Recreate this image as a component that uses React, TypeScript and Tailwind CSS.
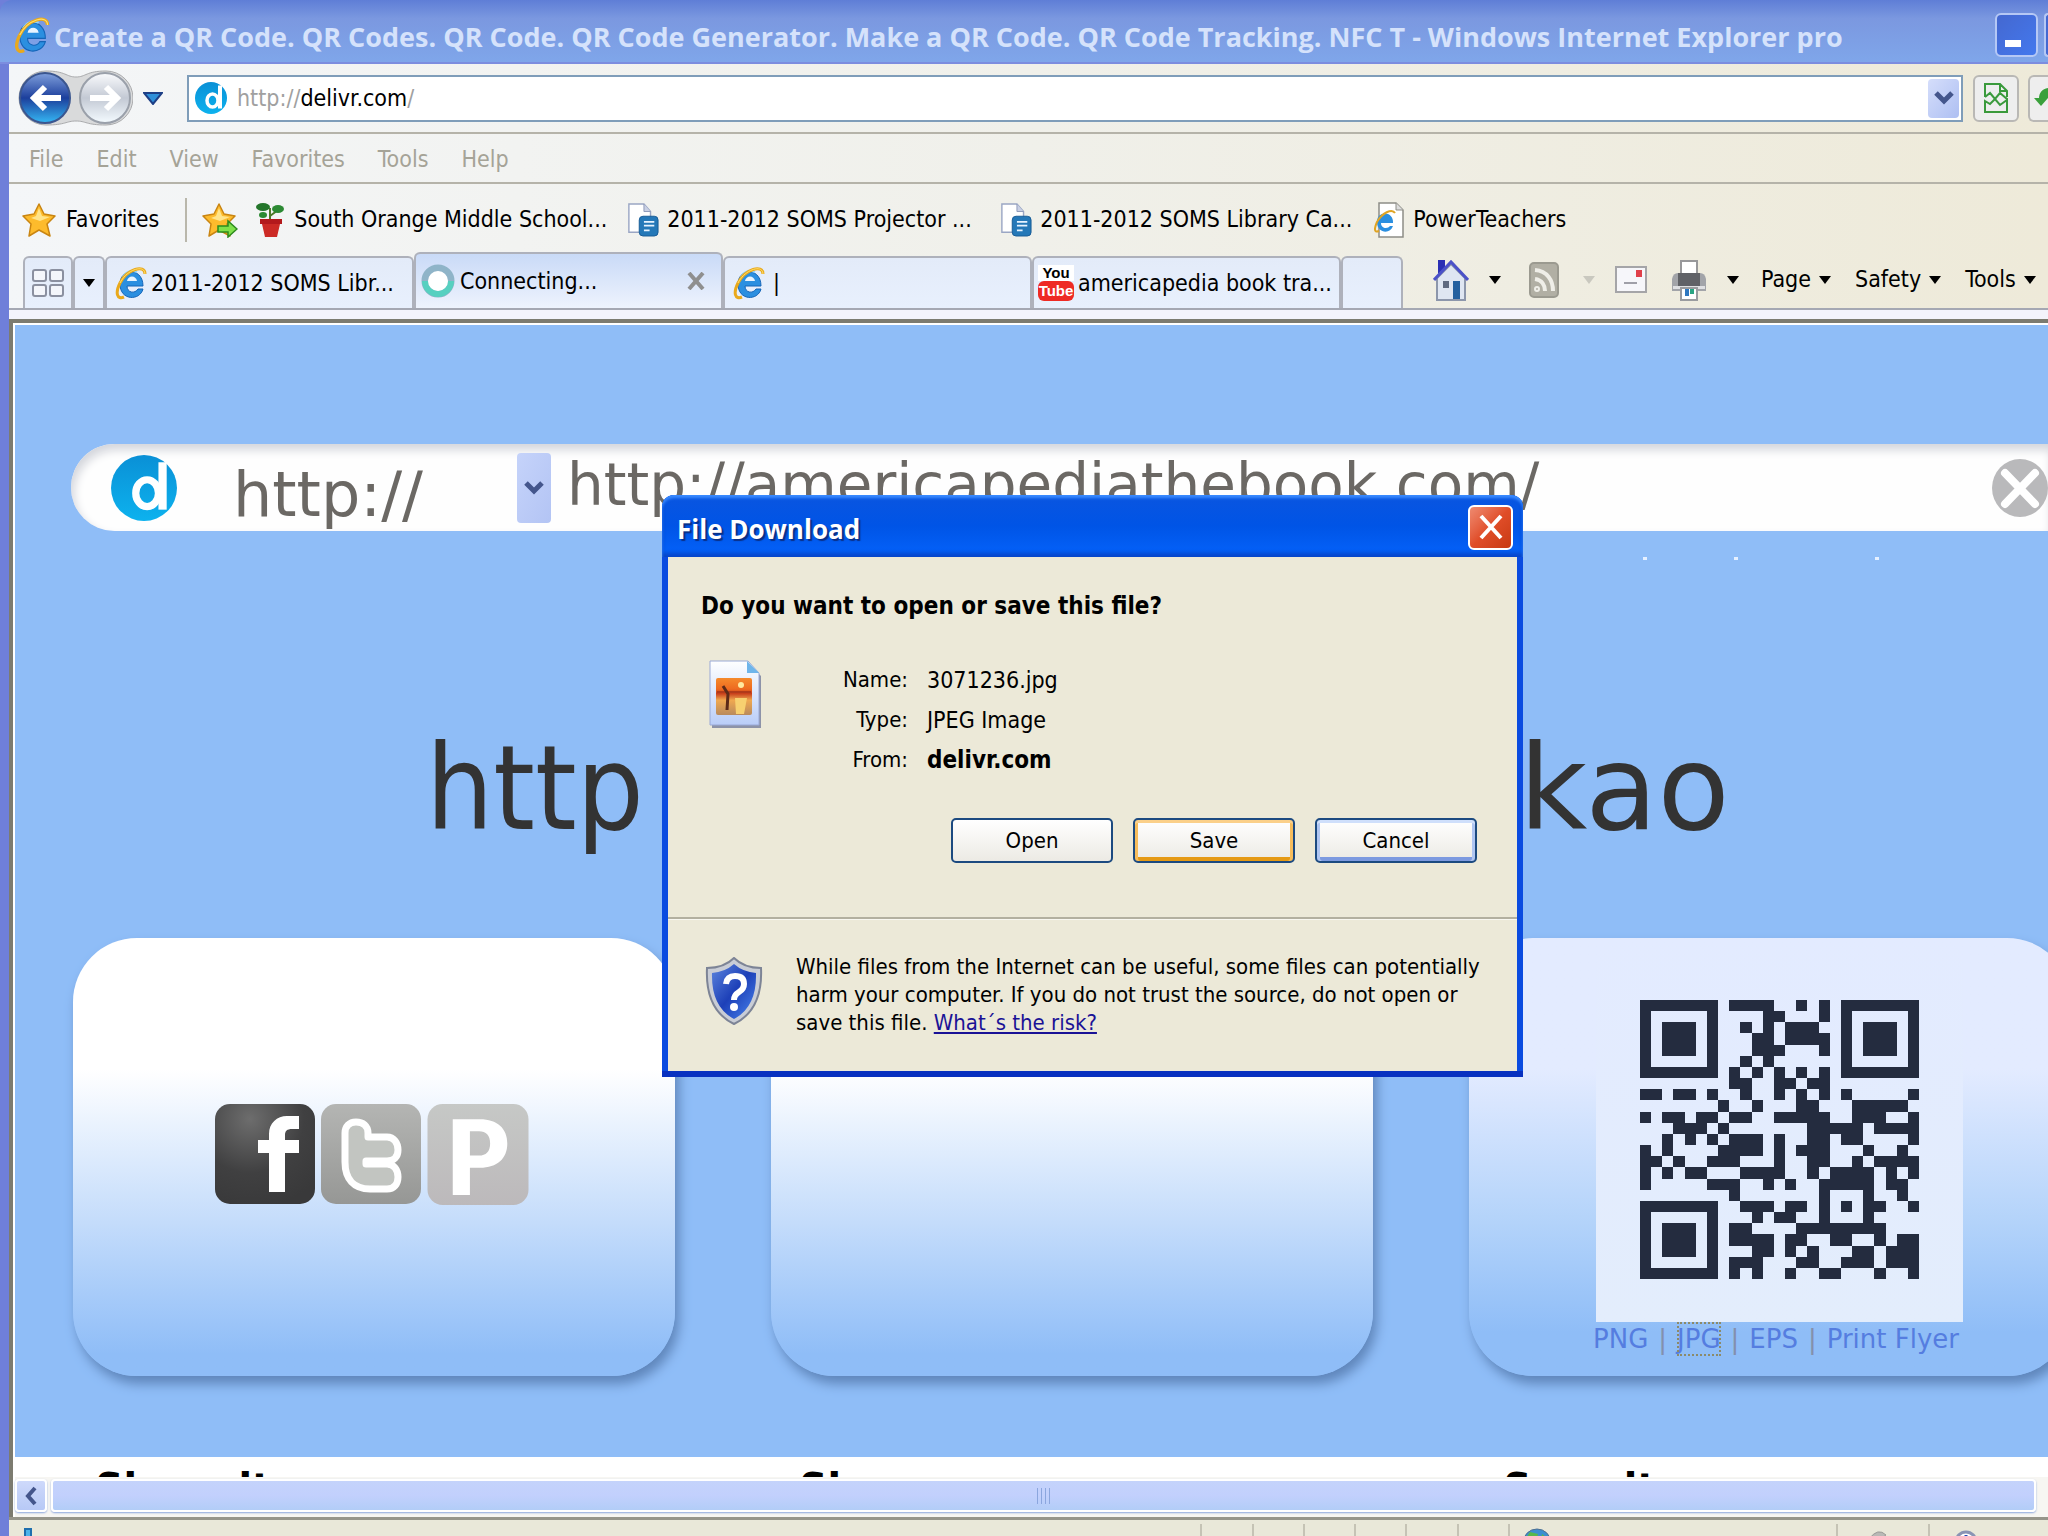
import { ReactNode } from 'react';

const qrRows = [
  '1111111011110010101111111',
  '1000001000011000101000001',
  '1011101001010111001011101',
  '1011101000110111101011101',
  '1011101000111000101011101',
  '1000001001010000001000001',
  '1111111010101010101111111',
  '0000000011001101100000000',
  '1101101001001010101000001',
  '0000000100100011000111110',
  '1011011011001111100111001',
  '0001110100000001111101111',
  '0010101011101001101100001',
  '1010000111101011100010010',
  '1101001110001001100101111',
  '1010110001111001011110101',
  '1000001110010100111110110',
  '0000000010000000100010010',
  '1111111001110110101011001',
  '1000001000101100100010000',
  '1011101011000011111111000',
  '1011101011110110011001011',
  '1011101000110101000110111',
  '1000001011100011001110111',
  '1111111010100100110001001',
];

const menuItems = ['File', 'Edit', 'View', 'Favorites', 'Tools', 'Help'];

const ui = "font-['DejaVu_Sans_Condensed','DejaVu_Sans',sans-serif]";

function IeIcon({ className = 'w-8 h-9' }: { className?: string }) {
  return (
    <svg viewBox="0 0 32 36" className={className} aria-hidden="true">
      <path d="M28 21H12c0 7 8 8 11 3h5c-3 12-23 12-23-5C5 3 28 2 28 21z" fill="#2b8fe0" stroke="#1565b8" />
      <path d="M12 16h10c-1-6-9-6-10 0z" fill="#e8f4ff" />
      <path d="M8 12c3-6 9-7 14-5" fill="none" stroke="#8fd4ff" strokeWidth="2" />
      <path d="M30 9C30-1 12 4 5 18c-5 10-3 17 4 14" fill="none" stroke="#e9a91c" strokeWidth="3" />
      <path d="M30 9C30-1 12 4 5 18" fill="none" stroke="#ffdf6e" strokeWidth="1" />
    </svg>
  );
}

function DelivrLogo({ className }: { className: string }) {
  return (
    <svg viewBox="0 0 64 64" className={className} aria-hidden="true">
      <defs>
        <linearGradient id="delivr" x1="0" y1="0" x2="0" y2="1">
          <stop offset="0" stopColor="#0a90d6" />
          <stop offset="1" stopColor="#0db2ee" />
        </linearGradient>
      </defs>
      <circle cx="32" cy="32" r="32" fill="url(#delivr)" />
      <ellipse cx="35" cy="37" rx="11" ry="13" fill="none" stroke="#fff" strokeWidth="7" />
      <path d="M50 7v46" stroke="#fff" strokeWidth="8" />
    </svg>
  );
}

function StarIcon({ add = false }: { add?: boolean }) {
  return (
    <svg viewBox="0 0 36 36" className="w-9 h-9" aria-hidden="true">
      <path d="M17 2l5 10 11 2-8 8 3 12-11-6-10 6 2-12-8-8 11-2z" fill="#fdbb2c" stroke="#c98512" strokeWidth="1.5" strokeLinejoin="round" />
      <path d="M17 6l3 8 8 1-10 4-9-3 5-2z" fill="#ffe48a" />
      {add && <path d="M16 24h10v-5l9 8-9 8v-5H16z" fill="#7fe04a" stroke="#2b8a1d" strokeWidth="1.5" />}
    </svg>
  );
}

function PlantIcon() {
  return (
    <svg viewBox="0 0 32 36" className="w-8 h-9" aria-hidden="true">
      <path d="M16 18V6M16 14l8-6" stroke="#4c7a28" strokeWidth="2" />
      <ellipse cx="9" cy="5" rx="7" ry="4" fill="#24762b" />
      <ellipse cx="24" cy="7" rx="6" ry="4" fill="#2c8a33" />
      <ellipse cx="9" cy="13" rx="4" ry="3" fill="#2c8a33" />
      <path d="M6 17h22v5H6z" fill="#b3191c" />
      <path d="M8 22h18l-3 13H11z" fill="#cc2a25" />
    </svg>
  );
}

function DocIcon() {
  return (
    <svg viewBox="0 0 34 36" className="w-8 h-9" aria-hidden="true">
      <path d="M2 1h16l7 8v22H2z" fill="#fff" stroke="#9aa6c4" strokeWidth="1.5" />
      <path d="M18 1v8h7" fill="#c9d0e4" stroke="#8b97b8" />
      <rect x="13" y="14" width="20" height="21" rx="4" fill="#2478b8" stroke="#155a94" />
      <path d="M18 20h11M18 24h11M18 29h6" stroke="#e6f3ff" strokeWidth="2" />
    </svg>
  );
}

function PageIeIcon() {
  return (
    <svg viewBox="0 0 32 36" className="w-8 h-9" aria-hidden="true">
      <path d="M6 1h17l7 7v27H6z" fill="#fff" stroke="#8d8d86" strokeWidth="1.5" />
      <path d="M23 1v7h7" fill="#ddd" stroke="#8d8d86" />
      <path d="M20 21H8c0 6 7 6 9 3h3c-3 9-16 7-16-4 0-12 17-11 16 1z" fill="#2b8fe0" />
      <path d="M22 11c-3-5-13 0-18 9-3 7-3 11 2 9" fill="none" stroke="#e0a423" strokeWidth="2" />
    </svg>
  );
}

function Caret({ color = '#000' }: { color?: string }) {
  return (
    <svg viewBox="0 0 12 8" className="w-3 h-2 shrink-0" aria-hidden="true">
      <path d="M0 0h12L6 8z" fill={color} />
    </svg>
  );
}

function Chevron({ className }: { className: string }) {
  return (
    <svg viewBox="0 0 20 14" className={className} aria-hidden="true">
      <path d="M2 2l8 8 8-8" fill="none" stroke="#44568c" strokeWidth="5" />
    </svg>
  );
}

function Bookmark({ icon, label, width }: { icon: ReactNode; label: string; width: string }) {
  return (
    <a href="#" className={`flex items-center gap-2 shrink-0 whitespace-nowrap ${width}`}>
      {icon}
      {label}
    </a>
  );
}

function TitleBar() {
  return (
    <header className="flex items-center h-16 pl-[14px] pr-0 shrink-0 rounded-tl-xl bg-linear-to-b from-[#5f7ed6] via-[#7b98e0] via-30% to-[#7fa6ea] border-b-2 border-[#7c8ddf] overflow-hidden">
      <IeIcon className="w-9 h-10 mt-2 shrink-0" />
      <h1 className="ml-1 pt-3 grow whitespace-nowrap font-['Open_Sans',sans-serif] font-bold text-[27px] text-[#d5e2fb]">
        Create a QR Code. QR Codes. QR Code. QR Code Generator. Make a QR Code. QR Code Tracking. NFC T - Windows Internet Explorer pro
      </h1>
      <button aria-label="Minimize" className="flex items-end w-[43px] h-11 mt-2 p-2 shrink-0 rounded-md border-2 border-[#b5c8f5] bg-linear-to-br from-[#4468d0] to-[#4378ee]">
        <span className="w-4 h-[7px] bg-white" />
      </button>
      <button aria-label="Maximize" className="w-1 h-11 mt-2 ml-[6px] shrink-0 rounded-l-md border-2 border-r-0 border-[#b5c8f5] bg-[#4468d0]" />
    </header>
  );
}

function NavBar() {
  return (
    <div className="flex items-center h-[70px] pl-2 shrink-0 border-b-2 border-[#b5b3a9] overflow-hidden">
      <svg viewBox="0 0 116 58" className="w-[116px] h-[58px] shrink-0" aria-label="Back and forward">
        <defs>
          <linearGradient id="back" x1="0" y1="0" x2="0" y2="1">
            <stop offset="0" stopColor="#7f9fdc" />
            <stop offset="0.5" stopColor="#1c3f9c" />
            <stop offset="1" stopColor="#35b8f4" />
          </linearGradient>
          <linearGradient id="fwd" x1="0" y1="0" x2="0" y2="1">
            <stop offset="0" stopColor="#fafbfd" />
            <stop offset="0.5" stopColor="#c3c9d4" />
            <stop offset="1" stopColor="#f4fbff" />
          </linearGradient>
        </defs>
        <path d="M29 2c20 0 20 6 30 6s10-6 30-6a27 27 0 010 54c-20 0-20-4-30-4s-10 4-30 4a27 27 0 010-54z" fill="#d9dadb" stroke="#a9aaac" />
        <circle cx="28" cy="29" r="25" fill="url(#back)" stroke="#3b568f" strokeWidth="2" />
        <circle cx="88" cy="29" r="25" fill="url(#fwd)" stroke="#9aa0aa" strokeWidth="2" />
        <path d="M44 29H18M28 18L17 29l11 11" fill="none" stroke="#fff" strokeWidth="6" />
        <path d="M73 29h26M89 18l11 11-11 11" fill="none" stroke="#fff" strokeWidth="6" />
      </svg>
      <button aria-label="Recent pages" className="ml-[10px] shrink-0">
        <svg viewBox="0 0 20 14" className="w-5 h-[14px]"><path d="M1 2h18l-9 11z" fill="#2f8fd8" stroke="#1d3f86" strokeWidth="2" /></svg>
      </button>
      <form className="flex items-center grow h-[47px] ml-6 pl-[6px] pr-[2px] border-2 border-[#7f9db9] bg-white" onSubmit={(e) => e.preventDefault()}>
        <DelivrLogo className="w-8 h-8 shrink-0" />
        <label className="flex items-center grow ml-[10px] text-[23px] text-[#a0a0a0] whitespace-nowrap">
          http://<span className="text-black">delivr.com</span>/
          <input aria-label="Address" className="grow min-w-0 outline-none" />
        </label>
        <button type="button" aria-label="Show addresses" className="flex items-center justify-center w-[31px] h-[39px] rounded-sm bg-linear-to-br from-[#d5defb] to-[#aebff2]">
          <Chevron className="w-5 h-[14px]" />
        </button>
      </form>
      <button aria-label="Compatibility view" className="flex items-center justify-center w-[46px] h-[47px] ml-[10px] shrink-0 rounded-md border-2 border-[#b9b8b5] bg-[#eeeeee]">
        <svg viewBox="0 0 26 32" className="w-[26px] h-8" fill="none" stroke="#3a9a3c" strokeWidth="2">
          <path d="M2 15V2h15l7 7v6M17 2v7h7M2 15l5-4 5 6 5-6 7 6M2 19l5 3 5-5 5 6 7-5v12H2z" />
        </svg>
      </button>
      <button aria-label="Refresh" className="flex items-center w-5 h-[47px] pl-1 ml-[9px] shrink-0 rounded-l-md border-2 border-r-0 border-[#b9b8b5] bg-[#eeeeee] overflow-hidden">
        <svg viewBox="0 0 14 24" className="w-[14px] h-6"><path d="M14 2C8 3 5 7 5 12H0l7 8 7-8z" fill="#3aa03c" /></svg>
      </button>
    </div>
  );
}

function FavoritesBar() {
  return (
    <div className="flex items-center h-[67px] pl-[13px] pt-1 shrink-0 overflow-hidden">
      <button className="flex items-center gap-2 shrink-0"><StarIcon />Favorites</button>
      <span className="w-[2px] h-11 ml-[26px] mr-[15px] bg-[#b9b7ab]" />
      <button aria-label="Add to favorites bar" className="mr-4"><StarIcon add /></button>
      <Bookmark icon={<PlantIcon />} label="South Orange Middle School..." width="w-[373px]" />
      <Bookmark icon={<DocIcon />} label="2011-2012 SOMS Projector ..." width="w-[373px]" />
      <Bookmark icon={<DocIcon />} label="2011-2012 SOMS Library Ca..." width="w-[373px]" />
      <Bookmark icon={<PageIeIcon />} label="PowerTeachers" width="w-[240px]" />
    </div>
  );
}

const tab = 'flex items-center h-[52px] shrink-0 border-2 border-b-0 border-[#aeb1bb] rounded-t-md bg-linear-to-b from-[#e3ebf9] to-[#e8f0fd] whitespace-nowrap';

function TabBar() {
  return (
    <div className="flex items-end h-[59px] pl-[14px] shrink-0 border-b-2 border-[#a5a8b3] overflow-hidden">
      <button aria-label="Quick tabs" className={`${tab} w-[50px] justify-center`}>
        <svg viewBox="0 0 34 30" className="w-[34px] h-[30px]" fill="#f4f6fb" stroke="#8b90a0" strokeWidth="2">
          <rect x="2" y="2" width="13" height="11" rx="2" />
          <rect x="19" y="2" width="13" height="11" rx="2" />
          <rect x="2" y="17" width="13" height="11" rx="2" />
          <rect x="19" y="17" width="13" height="11" rx="2" />
        </svg>
      </button>
      <button aria-label="Tab list" className={`${tab} w-8 justify-center`}><Caret /></button>
      <button className={`${tab} w-[309px] pl-2 gap-1`}><IeIcon />2011-2012 SOMS Libr...</button>
      <div className="flex items-center justify-between h-[56px] w-[309px] pl-1 pr-4 shrink-0 border-2 border-b-0 border-[#aeb1bb] rounded-t-md bg-linear-to-b from-[#c9daf7] to-[#eef3fd]">
        <button className="flex items-center gap-1">
          <svg viewBox="0 0 36 36" className="w-9 h-9">
            <circle cx="18" cy="18" r="13" fill="none" stroke="#8fb4c8" strokeWidth="7" />
            <path d="M5 18a13 13 0 0026 0" fill="none" stroke="#56d0c0" strokeWidth="6" />
            <circle cx="18" cy="18" r="10" fill="#fff" />
          </svg>
          Connecting...
        </button>
        <button aria-label="Close tab">
          <svg viewBox="0 0 18 18" className="w-[18px] h-[18px]"><path d="M2 1l14 16M16 1L2 17" stroke="#8f8f8f" strokeWidth="4" /></svg>
        </button>
      </div>
      <button className={`${tab} w-[309px] pl-2 gap-2`}><IeIcon />|</button>
      <button className={`${tab} w-[309px] pl-1 gap-1`}>
        <span className="flex flex-col w-9 shrink-0 text-center font-['Liberation_Sans_Narrow','Liberation_Sans',sans-serif] font-bold text-[15px] leading-4">
          <span className="bg-white text-black">You</span>
          <span className="rounded-md bg-[#ee2a24] text-white leading-5">Tube</span>
        </span>
        americapedia book tra...
      </button>
      <button aria-label="New tab" className={`${tab} w-[62px]`} />
      <div className="flex items-center h-full grow pl-[30px] shrink-0 whitespace-nowrap">
        <button aria-label="Home" className="flex items-center gap-5">
          <svg viewBox="0 0 36 42" className="w-9 h-[42px]">
            <path d="M4 19L18 5l14 14v22H4z" fill="#dfe6f2" stroke="#8c96ab" strokeWidth="2" />
            <path d="M5 1h7v8l-7 6z" fill="#2a2fb4" />
            <path d="M1 21L18 3l17 18" fill="none" stroke="#4b51c8" strokeWidth="3" />
            <path d="M20 22h7v18h-7z" fill="#24609f" />
            <path d="M10 22h6v7h-6z" fill="#5f6a80" />
          </svg>
          <Caret />
        </button>
        <button aria-label="Feeds" className="flex items-center gap-6 ml-7">
          <svg viewBox="0 0 30 36" className="w-[30px] h-9" fill="none" stroke="#efeee8" strokeWidth="4">
            <rect x="1" y="1" width="28" height="34" rx="4" fill="#b1afa4" stroke="#9b9a90" strokeWidth="2" />
            <path d="M6 17c7 1 10 6 10 12M6 8c12 1 18 10 18 21" />
            <circle cx="8" cy="27" r="1" />
          </svg>
          <Caret color="#c9c8bf" />
        </button>
        <button aria-label="Read mail" className="ml-5">
          <svg viewBox="0 0 32 27" className="w-8 h-[27px]">
            <rect x="1" y="1" width="30" height="25" fill="#f6f6fa" stroke="#a5a5a8" strokeWidth="2" />
            <rect x="21" y="4" width="6" height="7" fill="#e0404a" />
            <path d="M9 17h13" stroke="#9f9fa8" strokeWidth="2" />
          </svg>
        </button>
        <button aria-label="Print" className="flex items-center gap-5 ml-6">
          <svg viewBox="0 0 36 42" className="w-9 h-[42px]">
            <path d="M10 2h16v14H10z" fill="#fff" stroke="#98989a" strokeWidth="2" />
            <path d="M1 20q1-6 6-6h22q5 0 6 6v12H1z" fill="#a2a4a9" />
            <path d="M7 14h22v13H7z" fill="#606267" />
            <path d="M2 27h32v3H2z" fill="#dfe0e3" />
            <path d="M10 29h16v12H10z" fill="#fff" stroke="#9a9c9f" strokeWidth="2" />
            <path d="M14 30h4v7h-4z" fill="#2f78c0" />
            <path d="M19 30h4v5h-4z" fill="#2aa583" />
          </svg>
          <Caret />
        </button>
        <button className="flex items-center gap-2 ml-[22px]">Page <Caret /></button>
        <button className="flex items-center gap-2 ml-6">Safety <Caret /></button>
        <button className="flex items-center gap-2 ml-6">Tools <Caret /></button>
      </div>
    </div>
  );
}

function SearchBar() {
  return (
    <form
      onSubmit={(e) => e.preventDefault()}
      className="flex items-center h-[87px] w-full shrink-0 pl-10 rounded-l-full bg-[#fefefe] shadow-[inset_3px_6px_10px_#d4d6dc] font-['DejaVu_Sans',sans-serif] text-[58px] text-[#6b6864] overflow-hidden"
    >
      <DelivrLogo className="w-[66px] h-[66px] shrink-0" />
      <div className="relative ml-14 w-[318px] h-[70px] shrink-0">
        <select aria-label="Protocol" className="appearance-none w-full h-full leading-[70px] text-[62px] bg-transparent outline-none">
          <option>http://</option>
        </select>
        <span className="absolute right-0 top-0 flex items-center justify-center w-[34px] h-[70px] rounded-sm bg-linear-to-br from-[#c5d3fa] to-[#b3c4f4] pointer-events-none">
          <Chevron className="w-5 h-[14px]" />
        </span>
      </div>
      <input aria-label="Long URL" defaultValue="http://americapediathebook.com/" className="grow min-w-0 h-[87px] ml-4 pb-1 bg-transparent outline-none" />
      <button aria-label="Clear" className="shrink-0">
        <svg viewBox="0 0 56 60" className="w-14 h-[60px]">
          <ellipse cx="28" cy="30" rx="28" ry="29" fill="#b9b9bb" />
          <path d="M13 15l30 31M43 15L13 46" stroke="#fff" strokeWidth="8" strokeLinecap="round" />
        </svg>
      </button>
    </form>
  );
}

function SocialIcons() {
  return (
    <div className="flex gap-[6px]">
      <a href="#" aria-label="Facebook">
        <svg viewBox="0 0 100 100" className="w-[100px] h-[100px]">
          <defs>
            <radialGradient id="fb" cx="0.35" cy="0.15" r="0.9">
              <stop offset="0" stopColor="#6d6d6d" />
              <stop offset="0.6" stopColor="#404041" />
              <stop offset="1" stopColor="#39393a" />
            </radialGradient>
          </defs>
          <rect width="100" height="100" rx="15" fill="url(#fb)" />
          <path d="M54 88V49H43V36h11v-6c0-11 8-18 18-18h12v13h-7c-5 0-7 2-7 6v5h14v13H70v39z" fill="#fff" />
        </svg>
      </a>
      <a href="#" aria-label="Twitter">
        <svg viewBox="0 0 100 100" className="w-[100px] h-[100px]">
          <defs>
            <linearGradient id="tw" x1="0" y1="0" x2="0" y2="1">
              <stop offset="0" stopColor="#b4b5b3" />
              <stop offset="1" stopColor="#969795" />
            </linearGradient>
          </defs>
          <rect width="100" height="100" rx="15" fill="url(#tw)" />
          <path
            d="M35 18c-7 0-11 5-11 11v29c0 17 9 27 25 27h17c7 0 11-5 11-12s-4-13-11-13H45v-3h21c7 0 11-4 11-11s-4-13-11-13H47v-4c0-7-5-11-12-11z"
            fill="#c2c5c1"
            stroke="#fff"
            strokeWidth="7"
            strokeLinejoin="round"
          />
        </svg>
      </a>
      <a href="#" aria-label="Pinterest">
        <svg viewBox="0 0 100 100" className="w-[102px] h-[101px]">
          <defs>
            <linearGradient id="pin" x1="0" y1="0" x2="0" y2="1">
              <stop offset="0" stopColor="#c6c8c6" />
              <stop offset="1" stopColor="#bcb9bb" />
            </linearGradient>
          </defs>
          <rect width="100" height="100" rx="15" fill="url(#pin)" />
          <path fillRule="evenodd" d="M25 15h27c17 0 27 9 27 24S69 63 52 63H42v27H25zM42 27v24h9c7 0 11-4 11-12s-4-12-11-12z" fill="#fff" />
        </svg>
      </a>
    </div>
  );
}

function QrCode() {
  return (
    <svg viewBox="0 0 25 25" className="w-[279px] h-[279px]" shapeRendering="crispEdges" role="img" aria-label="QR code">
      {qrRows.map((row, y) =>
        row.split('').map((cell, x) =>
          cell === '1' ? <rect key={`${x}-${y}`} x={x} y={y} width="1" height="1" fill="#242c3f" /> : null
        )
      )}
    </svg>
  );
}

const card = 'w-[602px] h-[438px] shrink-0 rounded-[64px] shadow-[4px_8px_12px_#5f86bb] bg-linear-to-b';

function WebPage() {
  return (
    <main className="relative flex flex-col grow min-h-0 bg-white overflow-hidden">
      <div className="flex flex-col h-[1132px] shrink-0 pl-[56px] pt-[119px] bg-[#8fbdf7]">
        <SearchBar />
        <div className="flex h-[3px] mt-[26px] pl-[1572px] shrink-0">
          <i className="w-1 bg-[#e6f0ff] mr-[87px]" />
          <i className="w-1 bg-[#e6f0ff] mr-[137px]" />
          <i className="w-1 bg-[#e6f0ff]" />
        </div>
        {/* short link, partly behind the download dialog */}
        <h2 className="flex pl-[355px] mt-[143px] h-[170px] items-center text-[118px] leading-none text-[#333333]">
          <span>http</span>
          <span className="w-[875px] pl-2">:</span>
          <span className="font-['DejaVu_Sans',sans-serif]">kao</span>
        </h2>
        <div className="flex gap-24 mt-[65px] pl-[2px]">
          <section className={`${card} from-white from-30% via-[#c4dcfb] via-65% to-[#8fbdf7] to-95% flex justify-start pl-[142px] pt-[166px]`}>
            <SocialIcons />
          </section>
          <section className={`${card} from-white from-30% via-[#c4dcfb] via-65% to-[#8fbdf7] to-95%`} />
          <section className={`${card} from-[#e3ebff] from-30% via-[#b3d3fa] via-65% to-[#8fbdf7] to-90% pl-[127px]`}>
            <div className="w-[367px] h-[384px] pl-[44px] pt-[62px] bg-linear-to-b from-[#e3ebff] to-[#e3edfc] rounded-t-3xl">
              <QrCode />
            </div>
            <nav className="flex gap-[10px] -ml-[3px] w-[372px] whitespace-nowrap font-['DejaVu_Sans',sans-serif] text-[26px] leading-[34px] text-[#8390ad]">
              <a href="#" className="text-[#557de0]">PNG</a>|
              <a href="#" className="text-[#557de0] outline-2 outline-dotted outline-[#8b8a6a] -outline-offset-2">JPG</a>|
              <a href="#" className="text-[#557de0]">EPS</a>|
              <a href="#" className="text-[#557de0]">Print Flyer</a>
            </nav>
          </section>
        </div>
      </div>
      <div className="flex h-5 shrink-0 pl-[80px] pt-2 overflow-hidden text-[44px] leading-[50px] font-bold text-black">
        <span className="w-[704px]">Share it</span>
        <span className="w-[704px]">Show</span>
        <span>Scan it</span>
      </div>
    </main>
  );
}

function HorizontalScroll() {
  return (
    <div className="flex h-10 pt-[2px] pb-[5px] shrink-0 gap-1 bg-[#f7f6f2]">
      <button aria-label="Scroll left" className="flex items-center justify-center w-8 rounded-sm border-2 border-white bg-linear-to-b from-[#ced9fb] to-[#b7c9f6] shadow-[0_1px_2px_#8ba6de]">
        <svg viewBox="0 0 14 20" className="w-[14px] h-5"><path d="M11 2l-7 8 7 8" fill="none" stroke="#44568c" strokeWidth="4" /></svg>
      </button>
      <div className="flex items-center justify-center grow mr-3 rounded-sm border-2 border-white bg-linear-to-b from-[#c4d3fb] via-[#c2d0fd] to-[#b2cdf7] shadow-[0_1px_2px_#8ba6de]">
        <span className="flex gap-[3px]">
          <i className="w-px h-4 bg-[#8ba6de]" />
          <i className="w-px h-4 bg-[#8ba6de]" />
          <i className="w-px h-4 bg-[#8ba6de]" />
          <i className="w-px h-4 bg-[#8ba6de]" />
        </span>
      </div>
    </div>
  );
}

function StatusBar() {
  return (
    <footer className="flex h-[19px] shrink-0 pl-[10px] pt-1 border-t-3 border-[#96958a] bg-[#e9e8d9] overflow-hidden">
      <svg viewBox="0 0 18 24" className="w-[18px] h-6 mt-1 shrink-0"><path d="M6 1h6v9h5l-8 9-8-9h5z" fill="#4db4ea" stroke="#1f6fae" strokeWidth="2" /></svg>
      <div className="flex ml-auto h-6 shrink-0">
        <i className="w-[52px] border-l-2 border-[#c5c3b5]" />
        <i className="w-[51px] border-l-2 border-[#c5c3b5]" />
        <i className="w-[51px] border-l-2 border-[#c5c3b5]" />
        <i className="w-[51px] border-l-2 border-[#c5c3b5]" />
        <i className="w-[52px] border-l-2 border-[#c5c3b5]" />
        <i className="w-[51px] border-l-2 border-[#c5c3b5]" />
        <span className="w-[328px] pl-3 pt-1 border-l-2 border-[#c5c3b5]">
          <svg viewBox="0 0 30 30" className="w-[30px] h-[30px]">
            <circle cx="15" cy="15" r="14" fill="#3b8fd0" stroke="#4d6f92" />
            <path d="M8 4l8 2-2 8-8 6-4-7zM20 6l6 5-2 6-5-4z" fill="#58b84b" />
          </svg>
        </span>
        <span className="w-[92px] pl-7 pt-[6px] border-l-2 border-[#c5c3b5]">
          <svg viewBox="0 0 24 24" className="w-6 h-6"><path d="M3 9Q12-3 20 5l-8 6z" fill="#b9b9b6" stroke="#9b9b98" /></svg>
        </span>
        <span className="w-[120px] pl-6 pt-[6px] border-l-2 border-[#c5c3b5]">
          <svg viewBox="0 0 24 24" className="w-6 h-6"><circle cx="12" cy="12" r="10" fill="#fff" stroke="#8a94b4" strokeWidth="3" /><path d="M12 5v14" stroke="#2348b8" strokeWidth="3" /></svg>
        </span>
      </div>
    </footer>
  );
}

const dialogButton = 'w-[162px] h-[45px] rounded-[5px] border-2 border-[#1c4a80] bg-linear-to-b from-white to-[#eceae4]';

function DownloadDialog() {
  return (
    <div role="dialog" aria-label="File Download" className="absolute left-[662px] top-[495px] w-[861px] rounded-t-xl bg-[#0a4be0] border-b-[6px] border-[#0831c0] text-[22px] text-black">
      <div className="flex items-center justify-between h-[62px] pl-[15px] pr-[10px] pt-[2px] rounded-t-xl bg-linear-to-b from-[#0a55e0] via-[#0054e6] to-[#0563fb] shadow-[inset_0_3px_3px_#3a8bff,inset_0_-4px_4px_#0745c8]">
        <h2 className="pt-1 font-['Open_Sans',sans-serif] font-bold text-[26px] text-white [text-shadow:2px_2px_1px_#0a2f86]">File Download</h2>
        <button aria-label="Close" className="flex items-center justify-center w-[45px] h-[45px] rounded-md border-2 border-white bg-linear-to-br from-[#ee8a70] via-[#e04d28] to-[#c83a12]">
          <svg viewBox="0 0 26 26" className="w-[26px] h-[26px]"><path d="M3 2l20 22M23 2L3 24" stroke="#fff" strokeWidth="4" /></svg>
        </button>
      </div>
      <div className="mx-[6px] bg-[#ece9d8]">
        <div className="h-[362px] pl-[33px] pr-10 pt-[33px] border-b-2 border-[#b3b0a0]">
          <p className="font-bold text-2xl leading-8 whitespace-nowrap">Do you want to open or save this file?</p>
          <div className="flex mt-[38px]">
            <svg viewBox="0 0 54 70" className="w-[54px] h-[70px] ml-2">
              <defs>
                <linearGradient id="sunset" x1="0" y1="0" x2="0" y2="1">
                  <stop offset="0" stopColor="#f58a2c" />
                  <stop offset="0.3" stopColor="#ee6a20" />
                  <stop offset="0.42" stopColor="#c8401c" />
                  <stop offset="0.6" stopColor="#f0a850" />
                  <stop offset="1" stopColor="#b98a5c" />
                </linearGradient>
                <linearGradient id="sheet" x1="0" y1="0" x2="0" y2="1">
                  <stop offset="0" stopColor="#ffffff" />
                  <stop offset="1" stopColor="#b9cdf8" />
                </linearGradient>
              </defs>
              <path d="M3 4h37l12 12v52H3z" fill="#8d93a8" />
              <path d="M1 1h38l11 12v52H1z" fill="url(#sheet)" stroke="#9aa9d6" />
              <path d="M38 1l12 12H38z" fill="#6fb5ea" />
              <rect x="7" y="18" width="36" height="37" rx="2" fill="url(#sunset)" />
              <circle cx="32" cy="25" r="3" fill="#ffe9a0" />
              <path d="M26 38h12l-3 16h-8z" fill="#f7d070" />
              <path d="M8 32h34" stroke="#b03a1a" strokeWidth="2" />
              <path d="M14 26l5 8-1 16" stroke="#5c2a18" strokeWidth="3" fill="none" />
            </svg>
            <dl className="grid grid-cols-[145px_1fr] gap-x-[19px] leading-10">
              <dt className="text-right">Name:</dt><dd className="text-[23px]">3071236.jpg</dd>
              <dt className="text-right">Type:</dt><dd className="text-[23px]">JPEG Image</dd>
              <dt className="text-right">From:</dt><dd className="font-bold text-2xl leading-10">delivr.com</dd>
            </dl>
          </div>
          <div className="flex justify-end gap-5 mt-[38px]">
            <button className={dialogButton}>Open</button>
            <button className={`${dialogButton} shadow-[inset_0_3px_0_#fbd08a,inset_3px_0_0_#f7bd5c,inset_-3px_0_0_#f7bd5c,inset_0_-4px_0_#e59a15]`}>Save</button>
            <button className={`${dialogButton} shadow-[inset_0_3px_0_#cfdffb,inset_3px_0_0_#b0c6f2,inset_-3px_0_0_#b0c6f2,inset_0_-4px_0_#7d9ae0]`}>Cancel</button>
          </div>
        </div>
        <div className="flex h-[152px] pl-[37px] pt-[37px] border-t border-[#f8f7f0]">
          <svg viewBox="0 0 58 68" className="w-[58px] h-[68px] shrink-0">
            <defs>
              <linearGradient id="shield" x1="0" y1="0" x2="1" y2="1">
                <stop offset="0" stopColor="#5d86de" />
                <stop offset="0.5" stopColor="#1d40b8" />
                <stop offset="1" stopColor="#4a86ee" />
              </linearGradient>
            </defs>
            <path d="M29 1q10 10 27 10 2 42-27 56Q0 53 2 11 19 11 29 1z" fill="#c9cdd6" stroke="#7d8496" strokeWidth="2" />
            <path d="M29 7q9 8 22 9 1 34-22 46Q6 50 7 16q13-1 22-9z" fill="url(#shield)" />
            <path d="M21 27q1-8 9-8 9 0 9 8 0 5-5 8-5 3-5 8" fill="none" stroke="#fff" strokeWidth="6" />
            <circle cx="29" cy="50" r="4" fill="#fff" />
          </svg>
          <p className="ml-[33px] -mt-1 leading-7 whitespace-nowrap">
            While files from the Internet can be useful, some files can potentially<br />
            harm your computer. If you do not trust the source, do not open or<br />
            save this file. <a href="#" className="text-[#1a1296] underline">What´s the risk?</a>
          </p>
        </div>
      </div>
    </div>
  );
}

export default function App() {
  return (
    <div className={`relative flex flex-col h-screen overflow-hidden bg-[#6f7fd9] text-[23px] text-black ${ui}`}>
      <TitleBar />
      <div className="flex flex-col grow min-h-0 ml-[9px] bg-linear-to-r from-[#f4f6f8] via-[#f0f0ea] to-[#eeead9]">
        <NavBar />
        <nav className="flex items-center h-[50px] pl-5 pt-[2px] gap-[33px] shrink-0 border-b-2 border-[#b5b3a9] text-[#a5a397]">
          {menuItems.map((item) => (
            <button key={item}>{item}</button>
          ))}
        </nav>
        <FavoritesBar />
        <TabBar />
        <div className="h-[9px] shrink-0 bg-[#f3f3fb]" />
        <div className="flex flex-col grow min-h-0 border-t-4 border-l-4 border-[#7c7b70]">
          <div className="flex flex-col grow min-h-0 border-t-2 border-l-2 border-white">
            <WebPage />
            <HorizontalScroll />
          </div>
        </div>
        <StatusBar />
      </div>
      <DownloadDialog />
    </div>
  );
}
